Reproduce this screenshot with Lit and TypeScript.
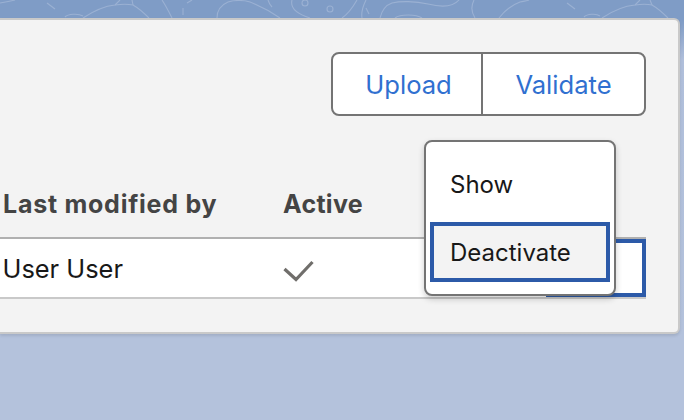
import { LitElement, html, css, svg } from "lit";
import { customElement } from "lit/decorators.js";

@customElement("app-root")
export class AppRoot extends LitElement {
  static styles = css`
    :host {
      display: block;
      width: 684px;
      height: 420px;
      overflow: hidden;
      position: relative;
      font-family: Inter, "Liberation Sans", sans-serif;
      background: linear-gradient(#7f9cc6 0, #7f9cc6 20px, #b0bfdb 60px, #b4c2dc 340px);
      box-sizing: border-box;
      padding-top: 18px;
    }
    .contours { position: absolute; left: 0; top: 0; }
    .card {
      position: relative;
      box-sizing: border-box;
      width: 680px;
      height: 316px;
      background: #f3f3f3;
      border: solid #c9c9c9;
      border-width: 2px 2px 2px 0;
      border-radius: 0 6px 6px 0;
      box-shadow: 0 2px 3px rgba(0,0,0,.1);
      display: flex;
      flex-direction: column;
    }
    .actions {
      display: flex;
      justify-content: flex-end;
      padding: 32px 32px 0 0;
    }
    .group {
      display: flex;
      height: 64px;
      box-sizing: border-box;
      background: #fff;
      border: 2px solid #747474;
      border-radius: 8px;
    }
    .group span {
      display: flex;
      align-items: center;
      justify-content: center;
      color: #3070d0;
      font-size: 25.6px;
    }
    .group .up { width: 150px; border-right: 2px solid #747474; box-sizing: border-box; padding-left: 3px; }
    .group .val { width: 161px; }
    .head {
      display: flex;
      align-items: center;
      box-sizing: border-box;
      height: 58px;
      margin-top: 63px;
      margin-right: 32px;
      padding: 0 0 8px 3px;
      color: #444;
      font-size: 25px;
      font-weight: 700;
    }
    .c1 { width: 280px; }
    .head .c1 { letter-spacing: 0.75px; }
    .head .c2 { letter-spacing: 0.3px; }
    .row {
      display: flex;
      align-items: center;
      height: 62px;
      box-sizing: border-box;
      margin-right: 32px;
      padding-left: 2.5px;
      background: #fff;
      border-top: 2px solid #b0b0b0;
      border-bottom: 2px solid #c9c9c9;
      color: #181818;
      font-size: 25.4px;
      position: relative;
    }
    .check { display: block; margin-left: 0.5px; }
    .focus {
      position: absolute;
      right: 0;
      top: 0;
      bottom: 0;
      width: 100px;
      box-sizing: border-box;
      border: 4px solid #2c5aa8;
    }
    .menu {
      position: absolute;
      left: 424px;
      top: 120px;
      width: 192px;
      height: 156px;
      box-sizing: border-box;
      background: #fff;
      border: 2px solid #747474;
      border-radius: 8px;
      box-shadow: 0 3px 6px rgba(0,0,0,.2);
      padding: 4px 4px 12px;
      color: #181818;
      font-size: 24px;
      display: flex;
      flex-direction: column;
    }
    .item {
      flex: 1;
      display: flex;
      align-items: center;
      padding-left: 20px;
      box-sizing: border-box;
    }
    .item.sel {
      flex: none;
      height: 60px;
      background: #f3f3f3;
      border: 4px solid #2c5aa8;
      padding-left: 16px;
    }
  `;

  render() {
    return html`
      <svg class="contours" width="684" height="20" viewBox="0 0 684 20" fill="none" stroke="#9bb1d3" stroke-width="1.1">
        ${svg`
          <path d="M0 3C6 2 11 1 15 0"/>
          <path d="M47 3L55 9"/>
          <path d="M65 17C68 14 78 13 83 16"/>
          <path d="M83 18C95 10 105 6 115 5 122 4 128 4 133 5 140 9 144 13 149 18"/>
          <path d="M115 5L120 0M133 5L132 0"/>
          <path d="M162 0C166 6 169 12 172 18"/>
          <path d="M183 8V15"/>
          <path d="M187 3L192 0"/>
          <path d="M217 18C217 10 221 5 228 2 234 0 244 0 250 2 260 6 270 11 280 18"/>
          <path d="M268 0C269 3 270 5 272 7"/>
          <circle cx="305" cy="3" r="3"/>
          <circle cx="330" cy="9" r="3"/>
          <path d="M292 0C290 8 297 14 310 18"/>
          <path d="M342 18C348 14 353 7 357 0"/>
          <path d="M366 0C363 6 361 12 362 18"/>
          <path d="M366 8L369 14"/>
          <path d="M380 18C382 10 386 5 392 3 400 1 415 1 428 4 440 7 452 8 459 0"/>
          <path d="M395 18C400 14 416 14 422 18"/>
          <path d="M474 0C471 6 471 12 475 18"/>
          <path d="M499 18C505 10 512 5 520 2 524 1 527 1 529 0"/>
          <path d="M567 3L575 9"/>
          <path d="M584 17C587 14 596 13 600 16"/>
          <path d="M602 18C614 10 624 6 635 5 642 4 647 4 652 5 659 9 663 13 668 18"/>
          <path d="M635 5L640 0M652 5L650 0"/>
        `}
      </svg>
      <div class="card">
        <div class="actions">
          <div class="group"><span class="up">Upload</span><span class="val">Validate</span></div>
        </div>
        <div class="head"><div class="c1">Last modified by</div><div class="c2">Active</div></div>
        <div class="row">
          <div class="c1">User User</div>
          <svg class="check" width="32" height="28" viewBox="0 0 32 28" fill="none" stroke="#706e6b" stroke-width="3.2"><path d="M1.5 15L13 25.5 29.5 8"/></svg>
          <div class="focus"></div>
        </div>
        <div class="menu">
          <div class="item">Show</div>
          <div class="item sel">Deactivate</div>
        </div>
      </div>
    `;
  }
}
